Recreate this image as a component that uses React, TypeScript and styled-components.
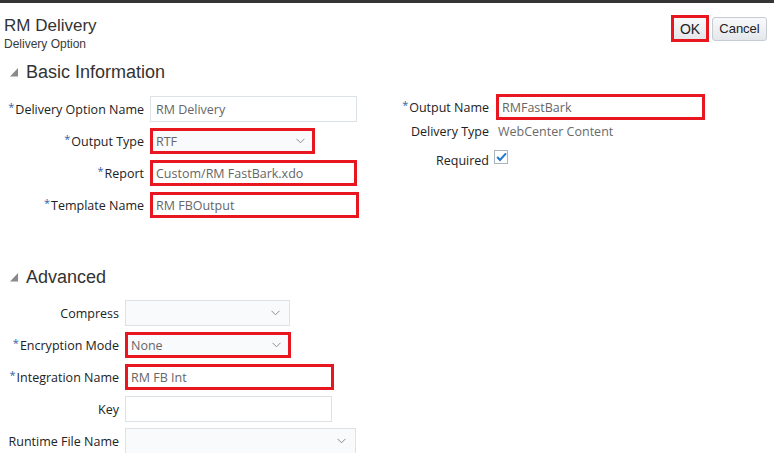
import React from 'react';
import styled, { createGlobalStyle } from 'styled-components';

const GlobalStyle = createGlobalStyle`
  body {
    margin: 0;
    background: #fff;
    font-family: "Open Sans", "Noto Sans", sans-serif;
  }
`;

const Page = styled.div`
  width: 774px;
  height: 453px;
  overflow: hidden;
`;

const TopBar = styled.div`
  height: 3px;
  background: #353535;
`;

const Header = styled.header`
  display: flex;
  justify-content: space-between;
  align-items: flex-start;
  padding: 0 7px 0 4px;
`;

const TitleBlock = styled.div`
  padding-top: 13px;
  font-family: "Liberation Sans", Arial, sans-serif;
  color: #333;
`;

const Title = styled.div`
  font-size: 17px;
  line-height: 20px;
`;

const SubTitle = styled.div`
  font-size: 12px;
  line-height: 16px;
  color: #3a3a3a;
`;

const Buttons = styled.div`
  display: flex;
  align-items: center;
  gap: 3px;
  padding-top: 12px;
`;

const Button = styled.button<{ $marked?: boolean; $w: number }>`
  box-sizing: border-box;
  width: ${p => p.$w}px;
  height: ${p => (p.$marked ? 27 : 24)}px;
  padding: 0;
  border: ${p => (p.$marked ? '3px solid #e8161f' : '1px solid #c5ccd3')};
  border-radius: ${p => (p.$marked ? 0 : 3)}px;
  background: linear-gradient(#f8f9fa, #e4e7ea);
  font-family: "Liberation Sans", Arial, sans-serif;
  font-size: ${p => (p.$marked ? 14 : 13)}px;
  color: #222;
`;

const Section = styled.section`
  padding-left: 4px;
`;

const SectionHead = styled.div<{ $top: number }>`
  display: flex;
  align-items: center;
  gap: 8px;
  margin-top: ${p => p.$top}px;
  padding-left: 6px;
  height: 22px;
  font-family: "Liberation Sans", Arial, sans-serif;
  font-size: 18px;
  color: #333;
`;

const Columns = styled.div<{ $top: number }>`
  display: flex;
  align-items: flex-start;
  margin-top: ${p => p.$top}px;
`;

const Rows = styled.div<{ $label: number }>`
  display: grid;
  grid-template-columns: ${p => p.$label}px auto;
  column-gap: 6px;
  row-gap: 6px;
  align-items: center;
  align-content: start;
`;

const Label = styled.div`
  text-align: right;
  font-size: 12.5px;
  color: #222;
  white-space: nowrap;
`;

const Star = styled.span`
  color: #2f63a8;
  font-size: 11px;
  position: relative;
  top: -3px;
  margin-right: 1px;
`;

const Field = styled.div<{ $w: number; $marked?: boolean; $select?: boolean }>`
  box-sizing: border-box;
  width: ${p => p.$w}px;
  height: 26px;
  display: flex;
  align-items: center;
  justify-content: space-between;
  border: ${p => (p.$marked ? '3px solid #e8161f' : '1px solid #dde2e6')};
  padding: 0 ${p => (p.$marked ? 7 : 9)}px 0 ${p => (p.$marked ? 3 : 5)}px;
  background: ${p => (p.$select ? '#f9fafc' : '#fff')};
  font-size: 12.5px;
  color: #666;
`;

const Value = styled.div`
  font-size: 12.5px;
  color: #6a6a6a;
  padding-left: 2px;
`;

const RightRows = styled(Rows)`
  margin-left: 1px;
  margin-top: -2px;
  row-gap: 0;
  grid-template-rows: 26px 23px 32px;
  column-gap: 7px;
`;

const Check = styled.span`
  display: inline-flex;
  width: 14px;
  height: 14px;
  box-sizing: border-box;
  border: 1px solid #a9b4bd;
  background: #fff;
  align-items: center;
  justify-content: center;
  align-self: start;
  margin-top: 7px;
  margin-left: -2px;
`;

const RequiredLabel = styled(Label)`
  align-self: end;
  padding-bottom: 6px;
`;

const Caret = () => (
  <svg width="8" height="9" viewBox="0 0 8 9">
    <path d="M8 0 L8 8.5 L0 8.5 Z" fill="#8a8a8a" />
  </svg>
);

const Chevron = () => (
  <svg width="9" height="6" viewBox="0 0 9 6">
    <polyline points="0.5,0.8 4.5,4.8 8.5,0.8" fill="none" stroke="#8c8c8c" strokeWidth="1" />
  </svg>
);

const Tick = () => (
  <svg width="11" height="10" viewBox="0 0 11 10">
    <polyline points="1.2,5 4,8 10,1.3" fill="none" stroke="#1f78d1" strokeWidth="2" />
  </svg>
);

const Req = ({ children }: { children: React.ReactNode }) => (
  <Label>
    <Star>*</Star>
    {children}
  </Label>
);

export default function App() {
  return (
    <Page>
      <GlobalStyle />
      <TopBar />
      <Header>
        <TitleBlock>
          <Title>RM Delivery</Title>
          <SubTitle>Delivery Option</SubTitle>
        </TitleBlock>
        <Buttons>
          <Button $marked $w={38}>OK</Button>
          <Button $w={55}>Cancel</Button>
        </Buttons>
      </Header>

      <Section>
        <SectionHead $top={9}>
          <Caret />
          Basic Information
        </SectionHead>
        <Columns $top={13}>
          <Rows $label={140}>
            <Req>Delivery Option Name</Req>
            <Field $w={207}>RM Delivery</Field>
            <Req>Output Type</Req>
            <Field $w={165} $marked $select>
              RTF <Chevron />
            </Field>
            <Req>Report</Req>
            <Field $w={207} $marked>Custom/RM FastBark.xdo</Field>
            <Req>Template Name</Req>
            <Field $w={209} $marked>RM FBOutput</Field>
          </Rows>
          <RightRows $label={129}>
            <Req>Output Name</Req>
            <Field $w={209} $marked>RMFastBark</Field>
            <Label>Delivery Type</Label>
            <Value>WebCenter Content</Value>
            <RequiredLabel>Required</RequiredLabel>
            <Check>
              <Tick />
            </Check>
          </RightRows>
        </Columns>
      </Section>

      <Section>
        <SectionHead $top={48}>
          <Caret />
          Advanced
        </SectionHead>
        <Columns $top={12}>
          <Rows $label={115}>
            <Label>Compress</Label>
            <Field $w={165} $select>
              <span /> <Chevron />
            </Field>
            <Req>Encryption Mode</Req>
            <Field $w={166} $marked $select>
              None <Chevron />
            </Field>
            <Req>Integration Name</Req>
            <Field $w={209} $marked>RM FB Int</Field>
            <Label>Key</Label>
            <Field $w={207} />
            <Label>Runtime File Name</Label>
            <Field $w={231} $select>
              <span /> <Chevron />
            </Field>
          </Rows>
        </Columns>
      </Section>
    </Page>
  );
}
